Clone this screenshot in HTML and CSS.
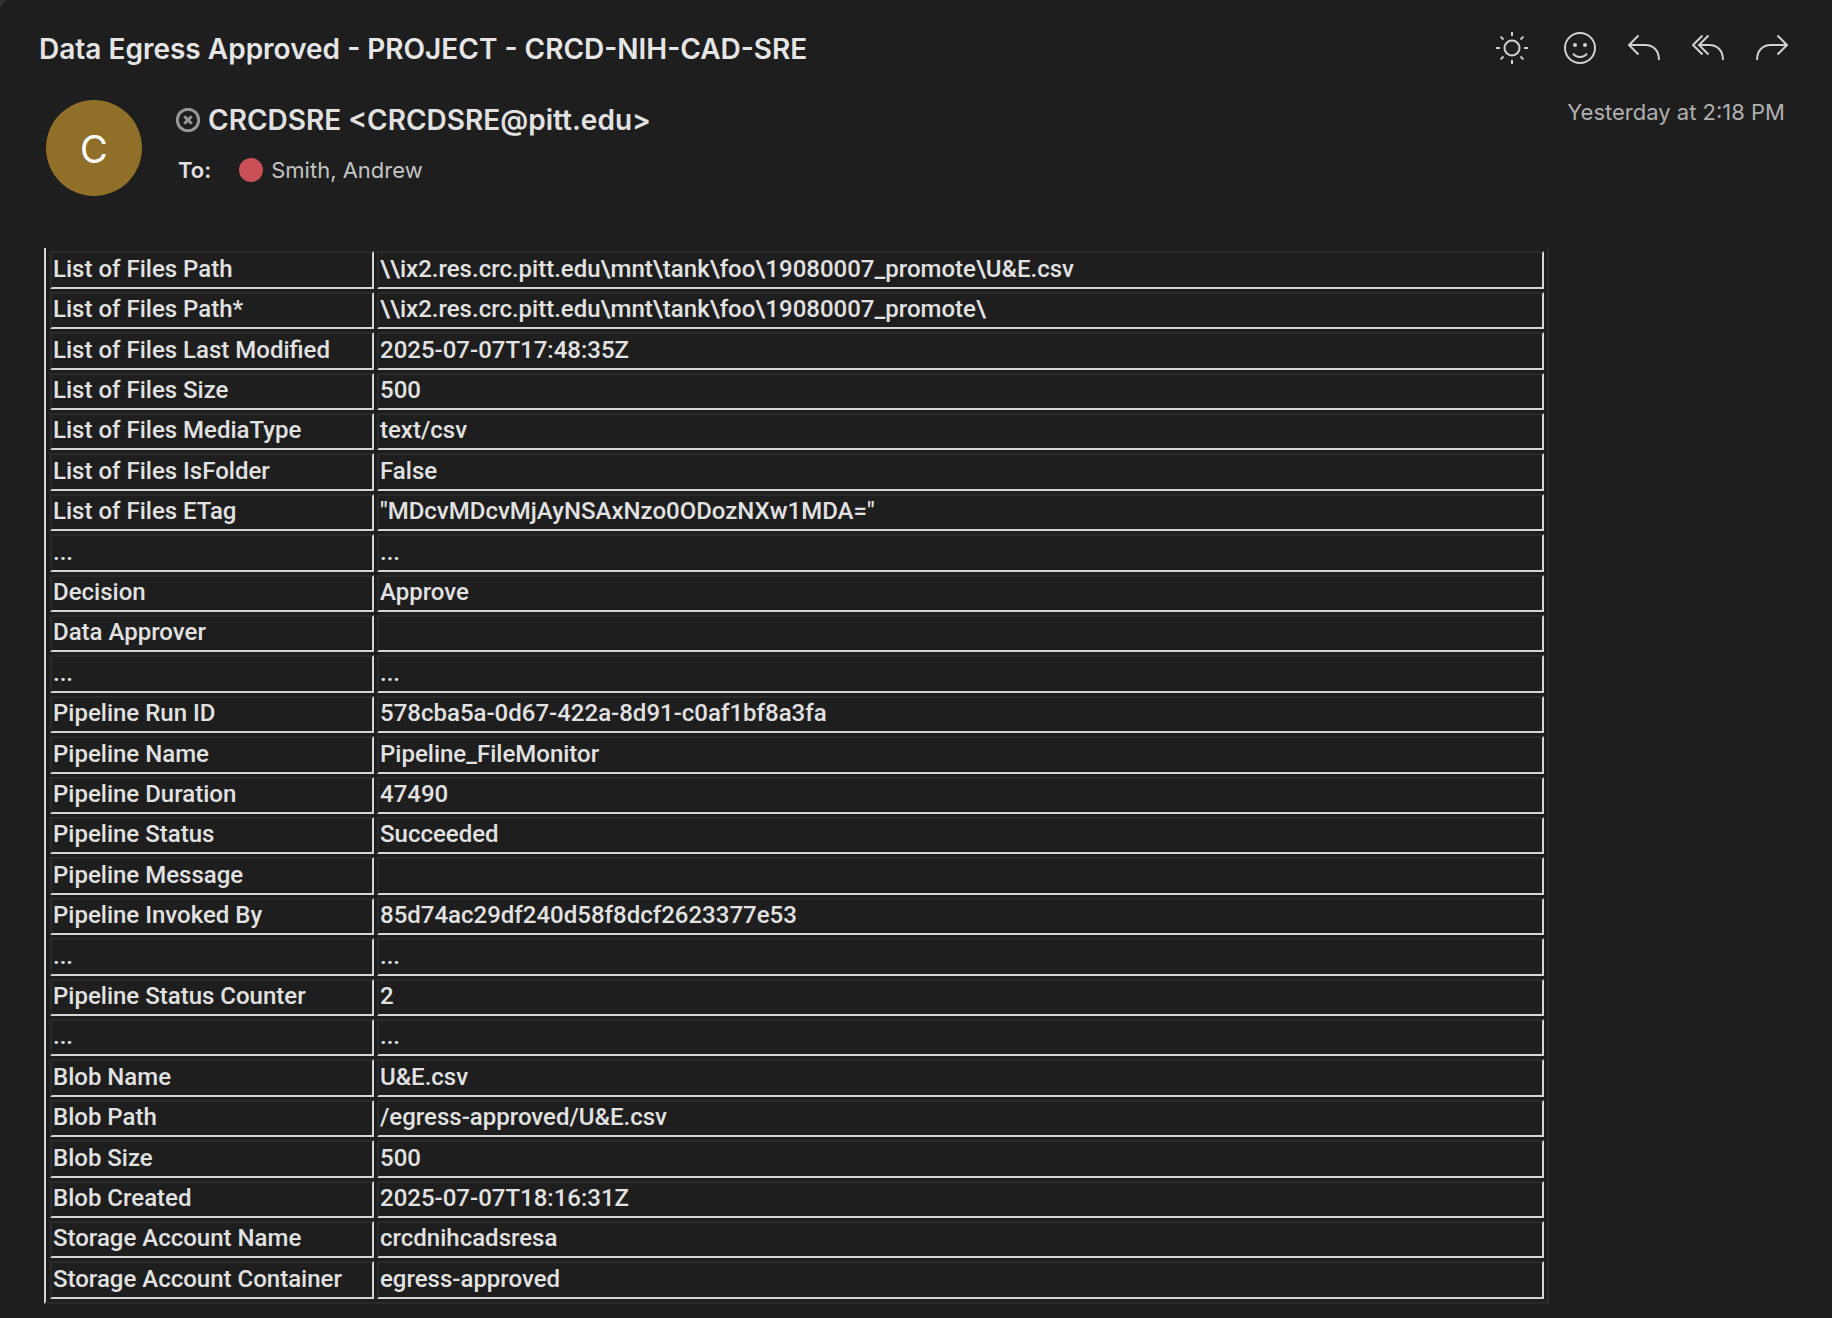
FILE: index.html
```
<!DOCTYPE html>
<html lang="en">
<head>
  <meta charset="UTF-8">
  <title>Data Egress Approved - PROJECT - CRCD-NIH-CAD-SRE</title>
  <link rel="stylesheet" href="styles.css">
</head>
<body>
  <main class="message">
    <header class="message-header">
      <div class="subject-row">
        <h1>Data Egress Approved - PROJECT - CRCD-NIH-CAD-SRE</h1>
        <div class="actions">
          <button type="button" class="theme" aria-label="Switch background">
            <svg viewBox="0 0 32 32"><circle cx="16" cy="16" r="7.5"/><path d="M16 0v4M16 28v4M0 16h4M28 16h4M4.6 4.6l2.9 2.9M24.5 24.5l2.9 2.9M4.6 27.4l2.9-2.9M24.5 7.5l2.9-2.9"/></svg>
          </button>
          <button type="button" aria-label="React">
            <svg viewBox="0 0 32 32"><circle cx="16" cy="16" r="15"/><path d="M9 21.6c3.4 4.4 10.6 4.4 14 0"/><circle class="eye" cx="11" cy="13" r="2"/><circle class="eye" cx="21" cy="13" r="2"/></svg>
          </button>
          <button type="button" aria-label="Reply">
            <svg viewBox="0 0 32 32"><path d="M10.5 3.5L1 13l9.5 9.5M1 13h16c8.5 0 14 5.500 14 15"/></svg>
          </button>
          <button type="button" aria-label="Reply all">
            <svg viewBox="0 0 32 32"><path d="M10.5 3.5L1 13l9.5 9.5M16.5 3.5L7 13l9.5 9.5M7 13h10c8.5 0 14 5.5 14 15"/></svg>
          </button>
          <button type="button" aria-label="Forward">
            <svg viewBox="0 0 32 32"><path d="M21.5 3.5L31 13l-9.5 9.5M31 13H15C6.5 13 1 18.5 1 28"/></svg>
          </button>
        </div>
      </div>

      <div class="sender-row">
        <div class="avatar">C</div>
        <div class="people">
          <div class="from">
            <svg viewBox="0 0 24 24"><circle cx="12" cy="12" r="10.7"/><path d="M8.3 8.3l7.4 7.4M15.7 8.3l-7.4 7.4"/></svg>
            <span>CRCDSRE &lt;CRCDSRE@pitt.edu&gt;</span>
          </div>
          <div class="to">
            <strong>To:</strong>
            <span class="dot"></span>
            <span class="recipient">Smith, Andrew</span>
          </div>
        </div>
        <time>Yesterday at 2:18 PM</time>
      </div>
    </header>

    <section class="message-body">
      <table>
        <tr><td>List of Files Path</td><td>\\ix2.res.crc.pitt.edu\mnt\tank\foo\19080007_promote\U&amp;E.csv</td></tr>
        <tr><td>List of Files Path*</td><td>\\ix2.res.crc.pitt.edu\mnt\tank\foo\19080007_promote\</td></tr>
        <tr><td>List of Files Last Modified</td><td>2025-07-07T17:48:35Z</td></tr>
        <tr><td>List of Files Size</td><td>500</td></tr>
        <tr><td>List of Files MediaType</td><td>text/csv</td></tr>
        <tr><td>List of Files IsFolder</td><td>False</td></tr>
        <tr><td>List of Files ETag</td><td>"MDcvMDcvMjAyNSAxNzo0ODozNXw1MDA="</td></tr>
        <tr><td>...</td><td>...</td></tr>
        <tr><td>Decision</td><td>Approve</td></tr>
        <tr><td>Data Approver</td><td></td></tr>
        <tr><td>...</td><td>...</td></tr>
        <tr><td>Pipeline Run ID</td><td>578cba5a-0d67-422a-8d91-c0af1bf8a3fa</td></tr>
        <tr><td>Pipeline Name</td><td>Pipeline_FileMonitor</td></tr>
        <tr><td>Pipeline Duration</td><td>47490</td></tr>
        <tr><td>Pipeline Status</td><td>Succeeded</td></tr>
        <tr><td>Pipeline Message</td><td></td></tr>
        <tr><td>Pipeline Invoked By</td><td>85d74ac29df240d58f8dcf2623377e53</td></tr>
        <tr><td>...</td><td>...</td></tr>
        <tr><td>Pipeline Status Counter</td><td>2</td></tr>
        <tr><td>...</td><td>...</td></tr>
        <tr><td>Blob Name</td><td>U&amp;E.csv</td></tr>
        <tr><td>Blob Path</td><td>/egress-approved/U&amp;E.csv</td></tr>
        <tr><td>Blob Size</td><td>500</td></tr>
        <tr><td>Blob Created</td><td>2025-07-07T18:16:31Z</td></tr>
        <tr><td>Storage Account Name</td><td>crcdnihcadsresa</td></tr>
        <tr><td>Storage Account Container</td><td>egress-approved</td></tr>
      </table>
    </section>
  </main>
</body>
</html>
```
FILE: styles.css
```
* { box-sizing: border-box; }
html { background: #333; }
body { margin: 0; font-family: Inter, "Liberation Sans", sans-serif; color: #e2e2e2; }
.message { min-height: 100vh; background: #1e1e1e; border-top-left-radius: 10px; }

/* header */
.message-header { padding: 30px 44px 0 39px; }
.subject-row { display: flex; justify-content: space-between; align-items: flex-start; }
h1 { margin: 0; font-size: 28px; font-weight: 600; line-height: 38px; color: #e6e6e6; }
.actions { display: flex; gap: 32px; }
.actions button { height: 36px; padding: 0; border: 0; background: none; color: #d0d0d0; cursor: pointer; }
.actions .theme { margin-right: 4px; }
.actions svg { display: block; width: 32px; height: 32px; }
svg { fill: none; stroke: currentColor; stroke-width: 2; }
.eye { fill: currentColor; stroke: none; }

.sender-row { display: flex; align-items: flex-start; margin-top: 32px; padding: 0 3px 0 7px; }
.avatar { width: 96px; height: 96px; border-radius: 50%; background: #907028; color: #fff; font-size: 38px; line-height: 98px; text-align: center; }
.people { flex: 1; margin-left: 34px; }
.from { display: flex; align-items: center; gap: 8px; font-size: 28px; font-weight: 600; line-height: 40px; }
.from svg { width: 24px; height: 24px; color: #9a9896; stroke-width: 3; }
.to { display: flex; align-items: center; margin-top: 14px; padding-left: 2px; font-size: 22px; line-height: 32px; }
.to strong { font-weight: 600; }
.dot { width: 24px; height: 24px; margin: 0 8px 0 28px; border-radius: 50%; background: #c85056; }
.recipient { color: #c4c4c4; }
time { font-size: 22px; line-height: 24px; color: #b0b0b0; }

/* mail body */
.message-body { padding: 52px 283px 15px 44px; }
table { width: 100%; border: 2px solid #2a2a2a; border-left-color: #d5d5d5; border-top: 0; border-spacing: 3px; padding-left: 1px; }
td { border: 2px solid; border-color: #2a2a2a #d5d5d5 #d5d5d5 #2a2a2a; padding: 0 1px 3px; font-family: Roboto, "Liberation Sans", sans-serif; font-size: 24px; font-weight: 500; line-height: 30px; }
td:first-child { width: 324px; }
tr:nth-child(5n+1) td, tr:nth-child(5n+3) td { padding-top: 1px; }
```
